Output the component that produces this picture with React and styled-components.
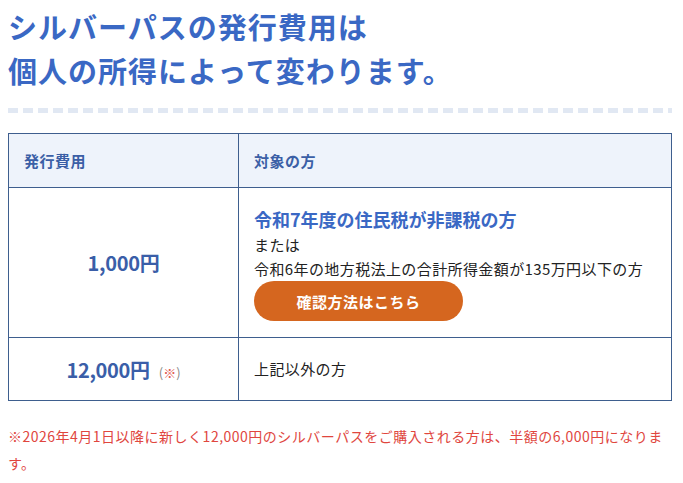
import styled, { createGlobalStyle } from 'styled-components'

const GlobalStyle = createGlobalStyle`
  body {
    margin: 0;
    background: #fff;
    font-family: "Noto Sans CJK JP", "Noto Sans", sans-serif;
    color: #222;
  }
`

const Page = styled.div`
  padding: 4px 11px 0 8px;
`

const Title = styled.h2`
  margin: 0;
  font-size: 29px;
  line-height: 44px;
  font-weight: 700;
  color: #3a68c4;
  letter-spacing: 1px;
`

const Dashes = styled.div`
  height: 5px;
  margin: 16px 0 20px;
  background: repeating-linear-gradient(
    to right,
    #e1e8f3 0 10px,
    transparent 10px 15px
  );
`

const Table = styled.table`
  width: 100%;
  table-layout: fixed;
  border-collapse: collapse;
  border: 1px solid #3e5e8e;
`

const HeadCell = styled.th`
  box-sizing: border-box;
  background: #eef3fb;
  border: 1px solid #3e5e8e;
  height: 54px;
  padding: 0 15px;
  text-align: left;
  font-size: 15px;
  font-weight: 700;
  color: #3b5fa6;
  letter-spacing: 0.5px;
  width: ${p => p.$w || 'auto'};
`

const Cell = styled.td`
  border: 1px solid #3e5e8e;
  padding: ${p => (p.$pad ? p.$pad : '0 15px')};
  height: ${p => p.$h};
  text-align: ${p => (p.$center ? 'center' : 'left')};
  vertical-align: ${p => (p.$top ? 'top' : 'middle')};
`

const Price = styled.span`
  font-size: 20px;
  font-weight: 700;
  color: #3a5ea8;
  letter-spacing: -0.3px;
`

const Mark = styled.span`
  font-size: 13px;
  color: #888;
  margin-left: 9px;
  & em {
    font-style: normal;
    color: #e0564d;
  }
`

const Target = styled.div`
  font-size: 18px;
  font-weight: 700;
  color: #3a68c4;
  line-height: 26px;
  margin-bottom: 1px;
`

const Note = styled.div`
  font-size: 15px;
  line-height: 24px;
  letter-spacing: 0.4px;
  white-space: nowrap;
  color: #222;
`

const Button = styled.a`
  display: flex;
  align-items: center;
  justify-content: center;
  width: 209px;
  height: 40px;
  border-radius: 20px;
  background: #d5661f;
  color: #fff;
  font-size: 15px;
  font-weight: 700;
  text-decoration: none;
  letter-spacing: 0.5px;
`

const Footnote = styled.p`
  margin: 22px 0 0;
  font-size: 14px;
  line-height: 27px;
  letter-spacing: 0.5px;
  color: #e0463e;
`

export default function App() {
  return (
    <>
      <GlobalStyle />
      <Page>
        <Title>
          シルバーパスの発行費用は
          <br />
          個人の所得によって変わります。
        </Title>
        <Dashes />
        <Table>
          <thead>
            <tr>
              <HeadCell $w="230px">発行費用</HeadCell>
              <HeadCell>対象の方</HeadCell>
            </tr>
          </thead>
          <tbody>
            <tr>
              <Cell $center $h="149px">
                <Price>1,000円</Price>
              </Cell>
              <Cell $top $pad="18px 15px 0">
                <Target>令和7年度の住民税が非課税の方</Target>
                <Note>または</Note>
                <Note>令和6年の地方税法上の合計所得金額が135万円以下の方</Note>
                <Button href="#">確認方法はこちら</Button>
              </Cell>
            </tr>
            <tr>
              <Cell $center $h="62px">
                <Price>12,000円</Price>
                <Mark>
                  (<em>※</em>)
                </Mark>
              </Cell>
              <Cell>
                <Note>上記以外の方</Note>
              </Cell>
            </tr>
          </tbody>
        </Table>
        <Footnote>
          ※2026年4月1日以降に新しく12,000円のシルバーパスをご購入される方は、半額の6,000円になります。
        </Footnote>
      </Page>
    </>
  )
}
